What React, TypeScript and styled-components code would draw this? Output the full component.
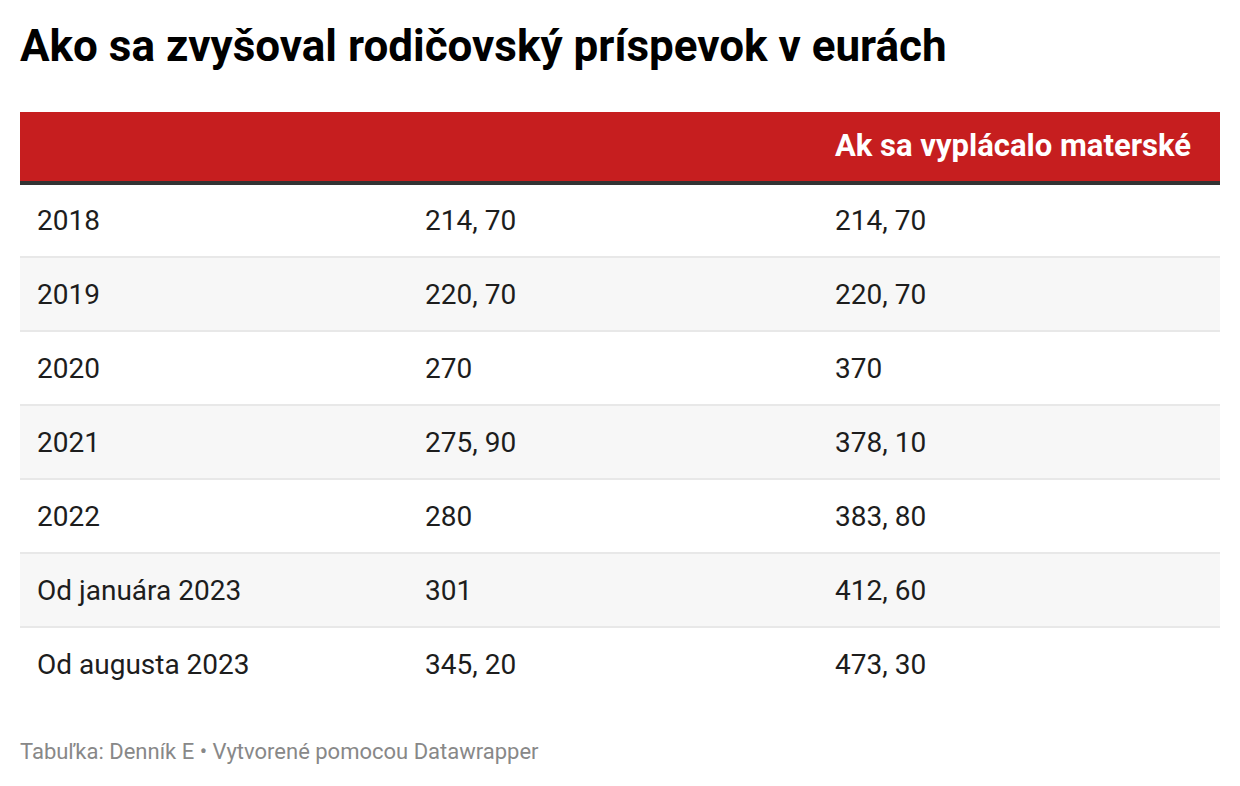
import * as React from 'react';
import styled, { createGlobalStyle } from 'styled-components';

const rows: [string, string, string][] = [
	['2018', '214, 70', '214, 70'],
	['2019', '220, 70', '220, 70'],
	['2020', '270', '370'],
	['2021', '275, 90', '378, 10'],
	['2022', '280', '383, 80'],
	['Od januára 2023', '301', '412, 60'],
	['Od augusta 2023', '345, 20', '473, 30']
];

const App = () => (
	<>
		<GlobalStyle />
		<Wrapper>
			<Title>Ako sa zvyšoval rodičovský príspevok v eurách</Title>
			<Table>
				<thead>
					<tr>
						<HeadCell />
						<HeadCell />
						<HeadCell>Ak sa vyplácalo materské</HeadCell>
					</tr>
				</thead>
				<tbody>
					{rows.map((row, i) => (
						<Row key={row[0]} striped={i % 2 === 1}>
							{row.map((cell, j) => (
								<Cell key={j}>{cell}</Cell>
							))}
						</Row>
					))}
				</tbody>
			</Table>
			<Footer>Tabuľka: Denník E • Vytvorené pomocou Datawrapper</Footer>
		</Wrapper>
	</>
);

const GlobalStyle = createGlobalStyle`
	body {
		margin: 0;
		background: #fff;
		font-family: Roboto, 'Liberation Sans', sans-serif;
		color: #1d1d1d;
	}
`;

const Wrapper = styled.div`
	padding: 20px 20px 0 20px;
`;

const Title = styled.h1`
	font-size: 44px;
	font-weight: 700;
	line-height: 52px;
	margin: 0 0 40px 0;
	color: #000;
`;

const Table = styled.table`
	width: 100%;
	border-collapse: collapse;
	table-layout: fixed;
	th,
	td {
		box-sizing: border-box;
	}
	th:nth-child(1) {
		width: 388px;
	}
	th:nth-child(2) {
		width: 410px;
	}
`;

const HeadCell = styled.th`
	background: #c61e1f;
	color: #fff;
	font-size: 31px;
	font-weight: 700;
	text-align: left;
	white-space: nowrap;
	height: 71px;
	padding: 0 17px 2px 17px;
	border-bottom: 4px solid #333;
	vertical-align: middle;
`;

const Row = styled.tr<{ striped: boolean }>`
	background: ${(props) => (props.striped ? '#f7f7f7' : '#fff')};
	border-bottom: 2px solid #e8e8e8;
	&:last-child {
		border-bottom: none;
	}
`;

const Cell = styled.td`
	font-size: 28px;
	height: 74px;
	padding: 0 17px;
	vertical-align: middle;
`;

const Footer = styled.div`
	margin-top: 38px;
	font-size: 22px;
	color: #888;
`;

export default App;
